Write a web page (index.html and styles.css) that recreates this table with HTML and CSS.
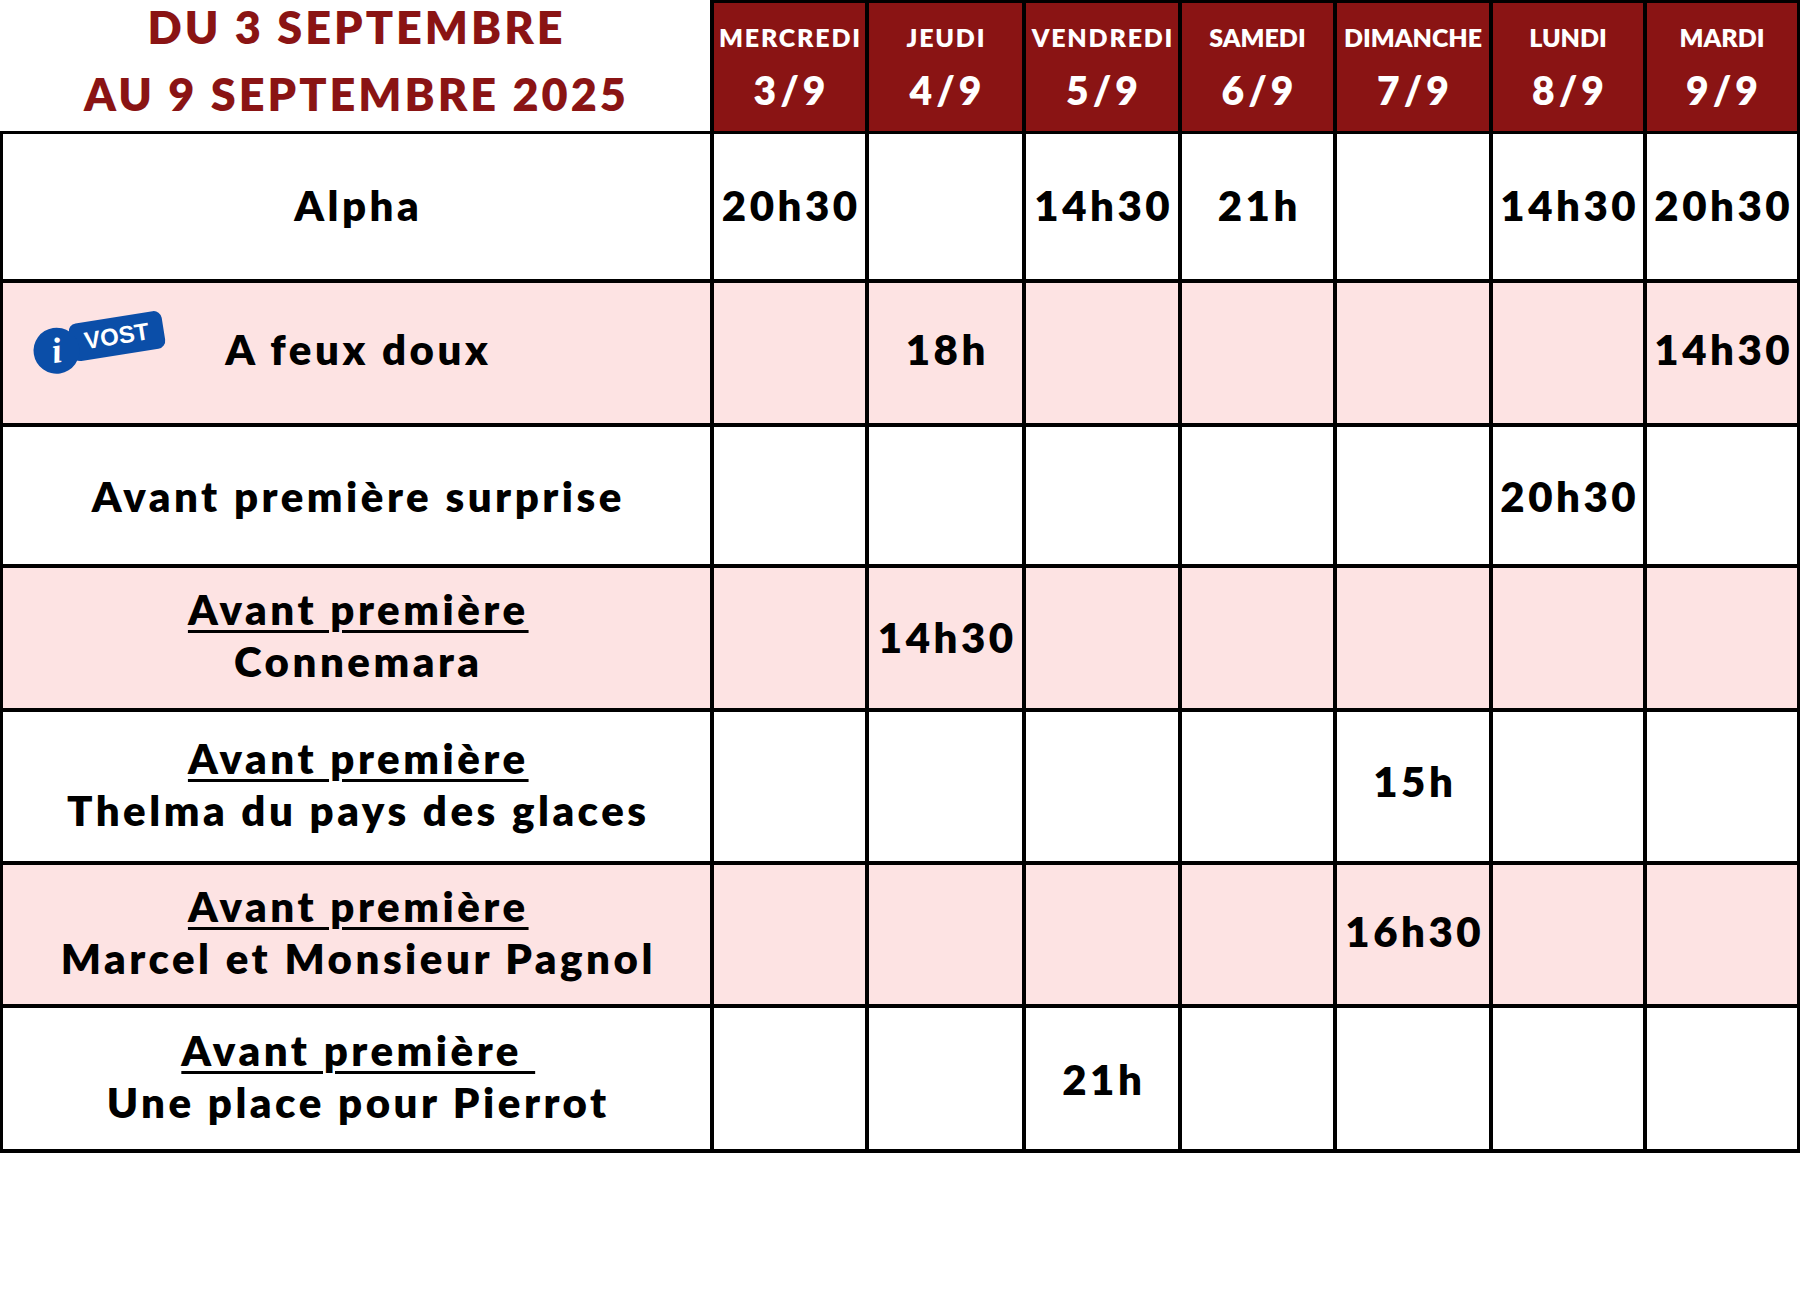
FILE: index.html
```html
<!DOCTYPE html>
<html lang="fr">
<head>
<meta charset="utf-8">
<title>Programme du 3 au 9 septembre 2025</title>
<link rel="stylesheet" href="styles.css">
</head>
<body>
<div class="schedule">
  <div class="title-cell">
    <div class="title">DU 3 SEPTEMBRE<br>AU 9 SEPTEMBRE 2025</div>
  </div>
  <div class="day wide"><span class="dname">MERCREDI</span><span class="ddate">3/9</span></div>
  <div class="day wide"><span class="dname">JEUDI</span><span class="ddate">4/9</span></div>
  <div class="day wide"><span class="dname">VENDREDI</span><span class="ddate">5/9</span></div>
  <div class="day"><span class="dname">SAMEDI</span><span class="ddate">6/9</span></div>
  <div class="day"><span class="dname">DIMANCHE</span><span class="ddate">7/9</span></div>
  <div class="day"><span class="dname">LUNDI</span><span class="ddate">8/9</span></div>
  <div class="day last"><span class="dname">MARDI</span><span class="ddate">9/9</span></div>

  <div class="row lift-s">
    <div class="film">Alpha</div>
    <div class="slot">20h30</div>
    <div class="slot"></div>
    <div class="slot">14h30</div>
    <div class="slot">21h</div>
    <div class="slot"></div>
    <div class="slot">14h30</div>
    <div class="slot last">20h30</div>
  </div>

  <div class="row alt lift-l">
    <div class="film with-badge">
      <div class="badge">
        <span class="badge-i">i</span>
        <span class="badge-tag">VOST</span>
      </div>
      A feux doux
    </div>
    <div class="slot"></div>
    <div class="slot">18h</div>
    <div class="slot"></div>
    <div class="slot"></div>
    <div class="slot"></div>
    <div class="slot"></div>
    <div class="slot last">14h30</div>
  </div>

  <div class="row">
    <div class="film">Avant première surprise</div>
    <div class="slot"></div>
    <div class="slot"></div>
    <div class="slot"></div>
    <div class="slot"></div>
    <div class="slot"></div>
    <div class="slot">20h30</div>
    <div class="slot last"></div>
  </div>

  <div class="row alt lift-xs">
    <div class="film two"><div><span class="ap">Avant première</span><br>Connemara</div></div>
    <div class="slot"></div>
    <div class="slot">14h30</div>
    <div class="slot"></div>
    <div class="slot"></div>
    <div class="slot"></div>
    <div class="slot"></div>
    <div class="slot last"></div>
  </div>

  <div class="row lift-xl">
    <div class="film two"><div><span class="ap">Avant première</span><br>Thelma du pays des glaces</div></div>
    <div class="slot"></div>
    <div class="slot"></div>
    <div class="slot"></div>
    <div class="slot"></div>
    <div class="slot">15h</div>
    <div class="slot"></div>
    <div class="slot last"></div>
  </div>

  <div class="row alt lift-m">
    <div class="film two"><div><span class="ap">Avant première</span><br>Marcel et Monsieur Pagnol</div></div>
    <div class="slot"></div>
    <div class="slot"></div>
    <div class="slot"></div>
    <div class="slot"></div>
    <div class="slot">16h30</div>
    <div class="slot"></div>
    <div class="slot last"></div>
  </div>

  <div class="row">
    <div class="film two"><div><span class="ap">Avant première&nbsp;</span><br>Une place pour Pierrot</div></div>
    <div class="slot"></div>
    <div class="slot"></div>
    <div class="slot">21h</div>
    <div class="slot"></div>
    <div class="slot"></div>
    <div class="slot"></div>
    <div class="slot last"></div>
  </div>
</div>
</body>
</html>
```

FILE: styles.css
```css
* {
  box-sizing: border-box;
}

html, body {
  margin: 0;
  padding: 0;
  background: #ffffff;
}

body {
  width: 1800px;
  height: 1300px;
  font-family: Lato, "Noto Sans", sans-serif;
  font-weight: 700;
  color: #000000;
}

.schedule {
  display: grid;
  grid-template-columns: 710px 155px 157px 156px 155px 156px 154px 157px;
  grid-template-rows: 134px 149px 144px 141px 144px 153px 143px 145px;
  width: 1800px;
}

.row {
  display: contents;
}

/* Header */
.title-cell {
  border-bottom: 3px solid #000;
  display: flex;
  justify-content: center;
  align-items: flex-start;
}

.title {
  margin-top: -6px;
  padding-left: 3px;
  font-size: 45px;
  line-height: 67px;
  letter-spacing: 3px;
  color: #8a1414;
  text-align: center;
  font-weight: 800;
}

.day {
  background: #8a1414;
  border-top: 3px solid #000;
  border-bottom: 3px solid #000;
  border-left: 4px solid #000;
  color: #ffffff;
  display: flex;
  flex-direction: column;
  align-items: center;
  padding-top: 19px;
  gap: 15px;
}

.day.last {
  border-right: 3px solid #000;
}

.dname {
  font-size: 25px;
  line-height: 30px;
  font-weight: 800;
}

.day.wide .dname {
  letter-spacing: 1.8px;
  padding-left: 1.8px;
}

.ddate {
  font-size: 39px;
  line-height: 46px;
  letter-spacing: 4px;
  padding-left: 4px;
  font-weight: 800;
}

/* Body */
.film,
.slot {
  border-bottom: 4px solid #000;
  display: flex;
  align-items: center;
  justify-content: center;
  text-align: center;
  font-size: 42px;
  line-height: 52px;
  letter-spacing: 3.5px;
  padding-left: 3.5px;
  font-weight: 800;
  background: #ffffff;
}

.film {
  border-left: 3px solid #000;
}

.slot {
  border-left: 4px solid #000;
  white-space: nowrap;
}

.slot.last {
  border-right: 3px solid #000;
}

.row.alt .film,
.row.alt .slot {
  background: #fde3e3;
}

/* small vertical nudges of the row content, as in the printed grid */
.row.lift-xs .slot { padding-bottom: 2px; }
.row.lift-s .film,
.row.lift-s .slot { padding-bottom: 4px; }
.row.lift-m .slot { padding-bottom: 7px; }
.row.lift-l .film,
.row.lift-l .slot { padding-bottom: 9px; }
.row.lift-xl .slot { padding-bottom: 11px; }

.row .film.two {
  padding-bottom: 6px;
}

.ap {
  text-decoration: underline;
  text-decoration-thickness: 3px;
  text-underline-offset: 5px;
}

/* VOST badge */
.with-badge {
  position: relative;
}

.badge {
  position: absolute;
  left: 30px;
  top: 38px;
  display: flex;
  align-items: center;
  letter-spacing: 0;
  transform: rotate(-9deg);
}

.badge-i {
  width: 46px;
  height: 46px;
  border-radius: 50%;
  background: #0b4ea8;
  color: #ffffff;
  font-family: "Liberation Serif", "DejaVu Serif", serif;
  font-style: italic;
  font-weight: 700;
  font-size: 36px;
  line-height: 46px;
  text-align: center;
  position: relative;
  z-index: 1;
}

.badge-tag {
  margin-left: -8px;
  margin-top: -10px;
  width: 94px;
  height: 38px;
  border-radius: 8px;
  background: #0b4ea8;
  color: #ffffff;
  font-family: "Liberation Sans", Arial, sans-serif;
  font-weight: 700;
  font-size: 24px;
  line-height: 38px;
  padding-left: 14px;
  text-align: left;
}
```
